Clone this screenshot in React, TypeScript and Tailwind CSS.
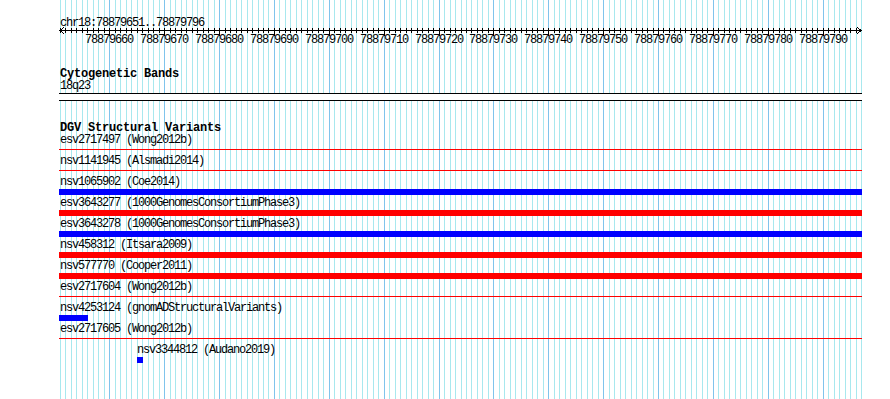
import React from "react";

const START = 78879651;
const END = 78879796;
const LEFT = 60;
const SCALE = 801 / 146;

const xOf = (bp: number) => Math.round(LEFT + (bp - START) * SCALE);

// one grid line per base, incl. the closing edge
const bases = Array.from({ length: END - START + 2 }, (_, i) => START + i);
const majors = bases.filter((bp) => bp % 10 === 0 && bp <= END);

type Variant = {
  name: string;
  study: string;
  color: "red" | "blue";
  kind: "bar" | "line";
  labelX: number;
  x: number;
  w: number;
};

const FULL = { labelX: 60, x: 59, w: 803 };

const variants: Variant[] = [
  { name: "esv2717497", study: "Wong2012b", color: "red", kind: "line", ...FULL },
  { name: "nsv1141945", study: "Alsmadi2014", color: "red", kind: "line", ...FULL },
  { name: "nsv1065902", study: "Coe2014", color: "blue", kind: "bar", ...FULL },
  { name: "esv3643277", study: "1000GenomesConsortiumPhase3", color: "red", kind: "bar", ...FULL },
  { name: "esv3643278", study: "1000GenomesConsortiumPhase3", color: "blue", kind: "bar", ...FULL },
  { name: "nsv458312", study: "Itsara2009", color: "red", kind: "bar", ...FULL },
  { name: "nsv577770", study: "Cooper2011", color: "red", kind: "bar", ...FULL },
  { name: "esv2717604", study: "Wong2012b", color: "red", kind: "line", ...FULL },
  { name: "nsv4253124", study: "gnomADStructuralVariants", color: "blue", kind: "bar", labelX: 60, x: 59, w: 29 },
  { name: "esv2717605", study: "Wong2012b", color: "red", kind: "line", ...FULL },
  { name: "nsv3344812", study: "Audano2019", color: "blue", kind: "bar", labelX: 137, x: 137, w: 6 },
];

function Grid() {
  return (
    <svg className="absolute inset-0" width={890} height={399} shapeRendering="crispEdges">
      {bases.map((bp) => (
        <line
          key={bp}
          x1={xOf(bp) + 0.5}
          x2={xOf(bp) + 0.5}
          y1={0}
          y2={399}
          stroke={bp % 10 === 0 ? "#80c4ec" : "#a8e8ee"}
        />
      ))}
    </svg>
  );
}

function Ruler() {
  const y = 30.5;
  const right = xOf(END + 1);
  return (
    <div className="relative h-[68px]">
      <svg className="absolute inset-0" width={890} height={68} shapeRendering="crispEdges">
        <line x1={LEFT} x2={right} y1={y} y2={y} stroke="#000" />
        {bases.slice(0, -1).map((bp) => (
          <line
            key={bp}
            x1={xOf(bp) + 0.5}
            x2={xOf(bp) + 0.5}
            y1={28}
            y2={bp % 10 === 0 ? 36 : 33}
            stroke="#000"
          />
        ))}
        <polyline points={`${LEFT + 4},27 ${LEFT},30.5 ${LEFT + 4},34`} fill="none" stroke="#000" />
        <polyline points={`${right - 4},27 ${right},30.5 ${right - 4},34`} fill="none" stroke="#000" />
      </svg>
      <div className="relative pt-[17px] pl-[60px] h-[30px] leading-[13px]">
        chr18:{START}..{END}
      </div>
      {majors.map((bp) => (
        <span
          key={bp}
          className="absolute top-[34px] w-[48px] text-center leading-[13px]"
          style={{ left: xOf(bp) - 24 }}
        >
          {bp}
        </span>
      ))}
    </div>
  );
}

function VariantRow({ v }: { v: Variant }) {
  const bg = v.color === "red" ? "bg-[#ff0000]" : "bg-[#0000ff]";
  return (
    <div className="h-[21px]">
      <div className="h-[13px] leading-[13px] whitespace-pre" style={{ paddingLeft: v.labelX }}>
        {v.name} ({v.study})
      </div>
      <div className="h-[6px]">
        {v.kind === "bar" ? (
          <div className={`h-[6px] ${bg}`} style={{ marginLeft: v.x, width: v.w }} />
        ) : (
          <div className={`mt-[2px] h-px ${bg}`} style={{ marginLeft: v.x, width: v.w }} />
        )}
      </div>
    </div>
  );
}

export default function App() {
  return (
    <div className="relative w-[890px] h-[399px] overflow-hidden bg-white text-black font-['Liberation_Mono',monospace] text-[12px] tracking-[-1.2px]">
      <Grid />
      <div className="relative">
        <Ruler />

        <div className="h-[12px] leading-[12px] pl-[60px] font-bold tracking-[-0.2px]">Cytogenetic Bands</div>
        <div className="h-[13px] leading-[13px] pl-[60px]">18q23</div>
        <div className="ml-[59px] w-[803px] h-[8px] border-y border-black bg-white" />

        <div className="mt-[21px] h-[12px] leading-[12px] pl-[60px] font-bold tracking-[-0.2px]">
          DGV Structural Variants
        </div>
        {variants.map((v) => (
          <VariantRow key={v.name} v={v} />
        ))}
      </div>
    </div>
  );
}
